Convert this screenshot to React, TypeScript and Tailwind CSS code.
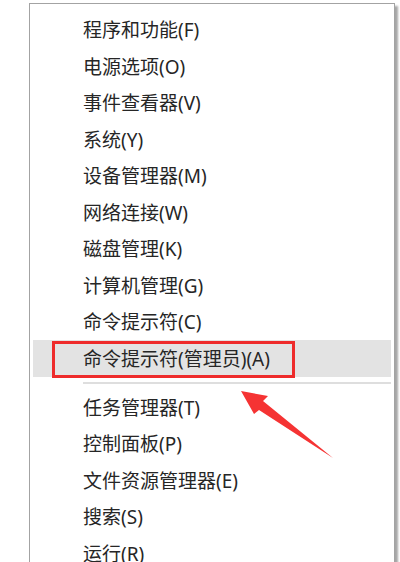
import React from "react";

const topItems = [
  "程序和功能(F)",
  "电源选项(O)",
  "事件查看器(V)",
  "系统(Y)",
  "设备管理器(M)",
  "网络连接(W)",
  "磁盘管理(K)",
  "计算机管理(G)",
  "命令提示符(C)",
];

const bottomItems = [
  "任务管理器(T)",
  "控制面板(P)",
  "文件资源管理器(E)",
  "搜索(S)",
  "运行(R)",
];

function MenuRow({ label, active }: { label: string; active?: boolean }) {
  return (
    <div
      className={
        active
          ? "relative flex h-[37px] items-center bg-[#e3e3e3] pl-[50px] pt-[3px]"
          : "flex h-[36.5px] items-center pl-[50px] pt-[3px]"
      }
    >
      <span>{label}</span>
      {active && (
        <div className="absolute left-[19px] top-[1px] h-[37px] w-[243px] border-[3px] border-[#ee2b2b]" />
      )}
    </div>
  );
}

export default function App() {
  return (
    <div className="relative h-[562px] w-[400px] overflow-hidden bg-white font-['Noto_Sans','Noto_Sans_CJK_SC',sans-serif] text-[19px] leading-none text-[#262626]">
      {/* Context menu */}
      <div className="ml-[29px] mt-[3px] w-[366px] border border-[#a3a3a3] bg-white px-[3px] pt-[7px] shadow-[3px_3px_2px_rgba(0,0,0,0.35)]">
        {topItems.map((item) => (
          <MenuRow key={item} label={item} />
        ))}
        <MenuRow label="命令提示符(管理员)(A)" active />
        <div className="my-[5px] ml-[50px] h-[2px] bg-[#dedede]" />
        {bottomItems.map((item) => (
          <MenuRow key={item} label={item} />
        ))}
      </div>

      {/* Red arrow pointing at the highlighted item */}
      <svg
        className="pointer-events-none absolute left-0 top-0"
        width="400"
        height="562"
        viewBox="0 0 400 562"
      >
        <polygon
          points="241,391 268,396 263,401 333,458 259,410 254,414"
          fill="#f53333"
        />
      </svg>
    </div>
  );
}
